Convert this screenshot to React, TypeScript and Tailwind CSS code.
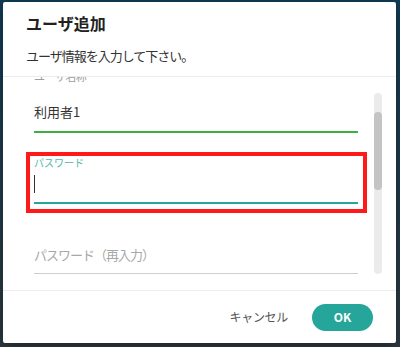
import React from "react";

export default function App() {
  const font = { fontFamily: '"Noto Sans CJK JP", "Noto Sans", sans-serif' };
  return (
    <div
      className="w-[400px] h-[347px] overflow-hidden pt-[2px] pl-[3px] bg-gradient-to-b from-[#0f3d57] to-[#2d3a42]"
      style={font}
    >
      <div className="w-[393px] h-[341px] bg-white flex flex-col rounded-[2px] shadow-[0_4px_16px_rgba(0,0,0,0.4)]">
        {/* Header */}
        <div className="h-[75px] pl-[23px] pt-[11px] border-b border-[#ececec] shrink-0">
          <div className="text-[16px] leading-[20px] font-bold text-[#212121]">ユーザ追加</div>
          <div className="mt-[14px] text-[13px] leading-[18px] tracking-[-1px] text-[#333]">
            ユーザ情報を入力して下さい。
          </div>
        </div>

        {/* Scroll area */}
        <div className="h-[214px] flex overflow-hidden shrink-0 border-b border-[#ececec]">
          <div className="w-[371px] pl-[31px] pr-[16px] overflow-hidden">
            <div className="-mt-[8px]">
              {/* Field 1 */}
              <div className="h-[14px] text-[11px] leading-[14px] text-[#9e9e9e] tracking-[-0.5px]">ユーザ名称</div>
              <div className="mt-[19px] h-[20px] text-[13px] leading-[20px] text-[#333]">利用者1</div>
              <div className="mt-[9px] h-[2px] bg-[#3cb043]" />

              {/* Field 2 (highlighted) */}
              <div className="mt-[19px] -ml-[8px] w-[341px] h-[61px] border-[4px] border-[#ff1a1a] pl-[4px] pr-[5px]">
                <div className="h-[14px] text-[10px] leading-[14px] text-[#4db6ac]">パスワード</div>
                <div className="mt-[5px] h-[18px] w-[1px] bg-[#333]" />
                <div className="mt-[9px] h-[2px] bg-[#26a69a]" />
              </div>

              {/* Field 3 */}
              <div className="mt-[32px] h-[20px] text-[13px] leading-[20px] tracking-[-1px] text-[#a8a8a8]">
                パスワード（再入力）
              </div>
              <div className="mt-[8px] h-[1px] bg-[#cfcfcf]" />
            </div>
          </div>
          {/* Scrollbar */}
          <div className="w-[8px] mt-[16px] mb-[16px] rounded-full bg-[#ebebeb] flex flex-col">
            <div className="mt-[19px] h-[78px] rounded-full bg-[#c4c4c4]" />
          </div>
        </div>

        {/* Footer */}
        <div className="flex-1 flex items-center justify-end pr-[23px] gap-[24px]">
          <span className="text-[12px] leading-[16px] tracking-[-0.3px] text-[#555]">キャンセル</span>
          <button className="w-[61px] h-[27px] rounded-full bg-[#26a69a] text-white text-[12px] font-bold flex items-center justify-center">
            OK
          </button>
        </div>
      </div>
    </div>
  );
}
